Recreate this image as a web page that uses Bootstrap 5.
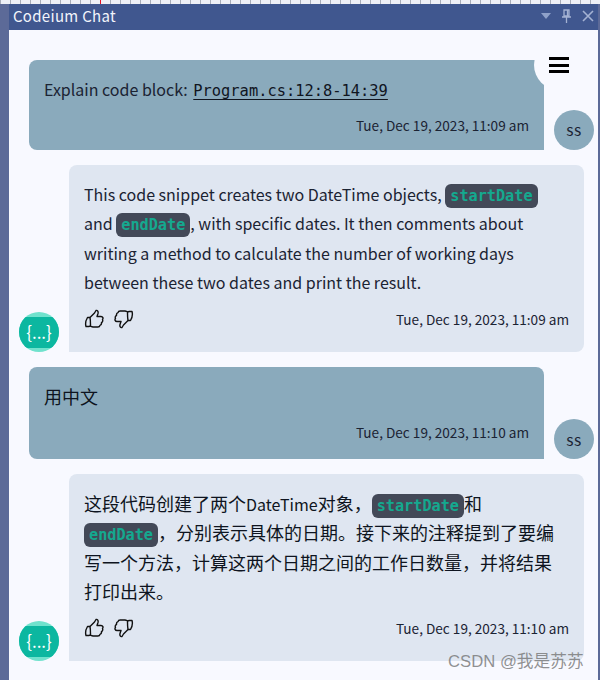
<!DOCTYPE html>
<html lang="en">
<head>
<meta charset="UTF-8" />
<title>Codeium Chat</title>
<link rel="stylesheet" href="https://cdn.jsdelivr.net/npm/bootstrap@5.3.2/dist/css/bootstrap.min.css" />
<style>
html, body { height: 680px; overflow: hidden; }
body { background: #5c6a98; font-family: "Noto Sans CJK SC", sans-serif; color: #1b2333; position: relative; }
.ruler { height: 4px; background: repeating-linear-gradient(90deg, #a9adb8 0 1px, #eef0f6 1px 10px); position: relative; }
.ruler-mark { position: absolute; left: 100px; top: 0; width: 1px; height: 4px; background: #e81123; }
.tool-window { margin-left: 9px; margin-right: 2px; height: 676px; background: #f8f9ff; }
.title-bar { height: 26px; background: #40578f; color: #f2f4fb; font-size: 15px; padding: 0 4px 3px; letter-spacing: .3px; line-height: 23px; }
.title-btns { gap: 11px; }
.title-btns svg { display: block; }
.chat-list { padding: 30px 4px 0 20px; gap: 15px; }
.msg-row { gap: 10px; }
.assistant-row { margin-left: -10px; }
.bubble { width: 515px; padding: 15px; border-radius: 8px; font-size: 16px; }
.user-bubble { background: #8aaabc; border-bottom-right-radius: 0; }
.bot-bubble { background: #dfe6f1; border-bottom-left-radius: 0; }
.bubble p { margin: 0; line-height: 29.3px; }
.bubble .zh-text { font-size: 18px; color: #0e1420; }
.zh-text .latin-word { font-size: 16px; line-height: 1; }
.stamp { font-size: 13.6px; line-height: 20px; }
.stamp-first { margin-top: 10.7px; }
.stamp-second { margin-top: 10.7px; padding-bottom: 2px; }
.file-ref { font-family: "DejaVu Sans Mono", monospace; font-size: 15.4px; line-height: 1; color: #10151f; text-decoration: underline; text-underline-offset: 3px; margin-left: 2px; }
.code-chip { font-family: "DejaVu Sans Mono", monospace; font-size: 15.2px; line-height: 1; font-weight: 700; color: #14a98f; background: #434958; border-radius: 6px; padding: 3px 5px; }
.avatar-user { width: 40px; height: 40px; border-radius: 50%; background: #8aaabc; font-size: 15.500px; flex: none; letter-spacing: .5px; }
.avatar-bot { width: 40px; height: 40px; border-radius: 50%; background: #70e2cd; flex: none; overflow: hidden; }
.avatar-bot span { width: 40px; height: 31px; background: #0cb7a0; color: #fff; font-size: 17px; line-height: 29px; }
.menu-circle { position: absolute; left: 534px; top: 40px; width: 50px; height: 50px; border-radius: 50%; background: #f8f9ff; }
.menu-bar { width: 20px; height: 3px; background: #000; }
.menu-circle .inner { gap: 3.5px; padding-top: 17px; }
.watermark { position: absolute; left: 448px; top: 651px; font-family: "Liberation Sans", "Noto Sans CJK SC", sans-serif; font-size: 16.700px; color: rgba(110,110,110,.75); line-height: 22px; }
.vote-icons { gap: 10px; }
.foot-row { margin-top: 12px; padding-bottom: 8px; }
</style>
</head>
<body>
<div class="ruler"><span class="ruler-mark"></span></div>
<div class="tool-window">
  <div class="title-bar d-flex justify-content-between align-items-center">
    <span>Codeium Chat</span>
    <div class="title-btns d-flex align-items-center">
      <svg width="10" height="6" viewBox="0 0 10 6"><path d="M0 0h10L5 6z" fill="#8fa1c9"/></svg>
      <svg width="9" height="14" viewBox="0 0 9 14"><path d="M2 1h5v6H2zM0 8h9M4.500 8v6M5.500 1v6" fill="none" stroke="#a4b2d3" stroke-width="1.300"/></svg>
      <svg width="12" height="12" viewBox="0 0 12 12"><path d="M1 1l10 10M11 1L1 11" stroke="#a4b2d3" stroke-width="1.600"/></svg>
    </div>
  </div>

  <div class="chat-list d-flex flex-column">
    <div class="msg-row d-flex align-items-end">
      <div class="bubble user-bubble">
        <p>Explain code block: <span class="file-ref">Program.cs:12:8-14:39</span></p>
        <div class="stamp stamp-first text-end">Tue, Dec 19, 2023, 11:09 am</div>
      </div>
      <div class="avatar-user d-flex align-items-center justify-content-center">ss</div>
    </div>

    <div class="msg-row assistant-row d-flex align-items-end">
      <div class="avatar-bot d-flex align-items-center"><span class="d-block text-center">{...}</span></div>
      <div class="bubble bot-bubble">
        <p>This code snippet creates two DateTime objects, <code class="code-chip">startDate</code> and <code class="code-chip">endDate</code>, with specific dates. It then comments about writing a method to calculate the number of working days between these two dates and print the result.</p>
        <div class="foot-row d-flex justify-content-between align-items-center">
          <div class="vote-icons d-flex">
            <svg width="20" height="20" viewBox="0 0 20 20" fill="none" stroke="#111" stroke-width="1.400" stroke-linejoin="round"><path d="M6 8.500 10.500 4 12 1.500c1.500-.500 2.500 1 2 3L13 7.500h4c2 0 2.500 2 1.500 3 .7 1.500-.200 2.800-1 3 .2 1.500-.5 2.500-1.500 2.800-.2 1-1 1.700-2.200 1.700H9c-1.500 0-2-.800-3-1"/><path d="M6 8.500H3.500C2 11 1 14 2 17.500H5c1 0 1.500-.500 1.500-1.500 0-2.500 0-5-.5-7.500z"/></svg>
            <svg width="20" height="20" viewBox="0 0 20 20" fill="none" stroke="#111" stroke-width="1.400" stroke-linejoin="round"><path d="M14 11.500 9.500 16 8 18.500c-1.500.500-2.500-1-2-3l1-3H3c-2 0-2.500-2-1.500-3-.7-1.500.2-2.800 1-3-.2-1.500.5-2.500 1.500-2.800C4.200 2.700 5 2 6.200 2H11c1.500 0 2 .800 3 1"/><path d="M14 11.500h2.500C18 9 19 6 18 2.500H15c-1 0-1.500.500-1.500 1.500 0 2.500 0 5 .5 7.500z"/></svg>
          </div>
          <div class="stamp">Tue, Dec 19, 2023, 11:09 am</div>
        </div>
      </div>
    </div>

    <div class="msg-row d-flex align-items-end">
      <div class="bubble user-bubble">
        <p class="zh-text">用中文</p>
        <div class="stamp stamp-second text-end">Tue, Dec 19, 2023, 11:10 am</div>
      </div>
      <div class="avatar-user d-flex align-items-center justify-content-center">ss</div>
    </div>

    <div class="msg-row assistant-row d-flex align-items-end">
      <div class="avatar-bot d-flex align-items-center"><span class="d-block text-center">{...}</span></div>
      <div class="bubble bot-bubble">
        <p class="zh-text">这段代码创建了两个<span class="latin-word">DateTime</span>对象，<code class="code-chip">startDate</code>和<br /><code class="code-chip">endDate</code>，分别表示具体的日期。接下来的注释提到了要编写一个方法，计算这两个日期之间的工作日数量，并将结果打印出来。</p>
        <div class="foot-row d-flex justify-content-between align-items-center">
          <div class="vote-icons d-flex">
            <svg width="20" height="20" viewBox="0 0 20 20" fill="none" stroke="#111" stroke-width="1.400" stroke-linejoin="round"><path d="M6 8.500 10.500 4 12 1.500c1.500-.500 2.500 1 2 3L13 7.500h4c2 0 2.500 2 1.500 3 .7 1.500-.200 2.800-1 3 .2 1.500-.5 2.500-1.500 2.800-.2 1-1 1.700-2.200 1.700H9c-1.500 0-2-.800-3-1"/><path d="M6 8.500H3.500C2 11 1 14 2 17.500H5c1 0 1.500-.500 1.500-1.500 0-2.500 0-5-.5-7.500z"/></svg>
            <svg width="20" height="20" viewBox="0 0 20 20" fill="none" stroke="#111" stroke-width="1.400" stroke-linejoin="round"><path d="M14 11.500 9.500 16 8 18.500c-1.500.500-2.500-1-2-3l1-3H3c-2 0-2.500-2-1.500-3-.7-1.500.2-2.800 1-3-.2-1.500.5-2.500 1.500-2.800C4.200 2.700 5 2 6.200 2H11c1.500 0 2 .800 3 1"/><path d="M14 11.500h2.500C18 9 19 6 18 2.500H15c-1 0-1.500.500-1.500 1.500 0 2.500 0 5 .5 7.500z"/></svg>
          </div>
          <div class="stamp">Tue, Dec 19, 2023, 11:10 am</div>
        </div>
      </div>
    </div>
  </div>
</div>
<div class="menu-circle"><div class="inner d-flex flex-column align-items-center"><span class="menu-bar"></span><span class="menu-bar"></span><span class="menu-bar"></span></div></div>
<div class="watermark">CSDN @我是苏苏</div>
<script src="https://cdn.jsdelivr.net/npm/bootstrap@5.3.2/dist/js/bootstrap.bundle.min.js"></script>
</body>
</html>
